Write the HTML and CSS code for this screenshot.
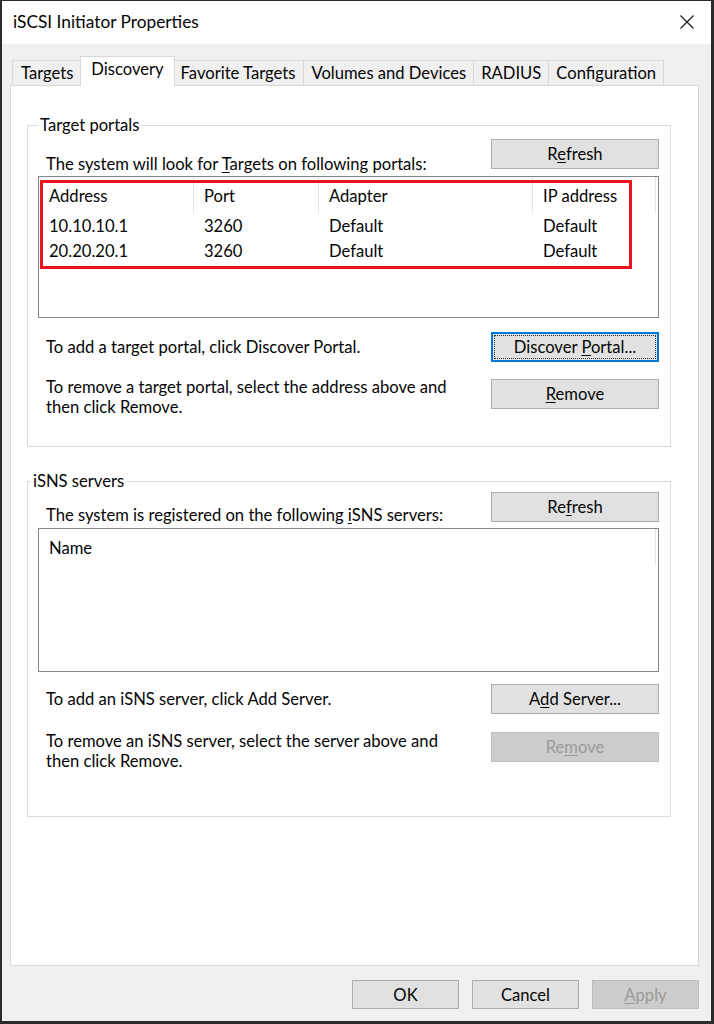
FILE: index.html
```html
<!DOCTYPE html>
<html lang="en">
<head>
<meta charset="utf-8">
<title>iSCSI Initiator Properties</title>
<link rel="stylesheet" href="styles.css">
</head>
<body>
<div class="window">
  <header class="titlebar">
    <span class="title">iSCSI Initiator Properties</span>
    <svg class="close" width="16" height="16" viewBox="0 0 16 16" aria-label="Close"><path d="M1.5 1.5 L14.5 14.5 M14.5 1.5 L1.5 14.5" stroke="#1a1a1a" stroke-width="1.2" fill="none"/></svg>
  </header>
  <div class="client">
    <nav class="tabs">
      <div class="tab">Targets</div>
      <div class="tab active">Discovery</div>
      <div class="tab">Favorite Targets</div>
      <div class="tab">Volumes and Devices</div>
      <div class="tab">RADIUS</div>
      <div class="tab">Configuration</div>
    </nav>
    <div class="panel">
      <fieldset class="group group-portals">
        <legend>Target portals</legend>
        <div class="head-row">
          <span class="label">The system will look for <u>T</u>argets on following portals:</span>
          <button class="btn"><span>R<u>e</u>fresh</span></button>
        </div>
        <div class="listview lv-portals">
          <div class="lv-row lv-header">
            <div class="cell">Address</div>
            <div class="cell">Port</div>
            <div class="cell">Adapter</div>
            <div class="cell">IP address</div>
          </div>
          <div class="lv-row">
            <div class="cell">10.10.10.1</div>
            <div class="cell">3260</div>
            <div class="cell">Default</div>
            <div class="cell">Default</div>
          </div>
          <div class="lv-row">
            <div class="cell">20.20.20.1</div>
            <div class="cell">3260</div>
            <div class="cell">Default</div>
            <div class="cell">Default</div>
          </div>
          <div class="highlight"></div>
        </div>
        <div class="action-row first">
          <span class="label">To add a target portal, click Discover Portal.</span>
          <button class="btn focused"><span class="focus-ring"><span>Discover <u>P</u>ortal...</span></span></button>
        </div>
        <div class="action-row second">
          <span class="label">To remove a target portal, select the address above and<br>then click Remove.</span>
          <button class="btn"><span><u>R</u>emove</span></button>
        </div>
      </fieldset>

      <fieldset class="group group-isns">
        <legend>iSNS servers</legend>
        <div class="head-row">
          <span class="label">The system is registered on the following <u>i</u>SNS servers:</span>
          <button class="btn"><span>Re<u>f</u>resh</span></button>
        </div>
        <div class="listview lv-isns">
          <div class="lv-row lv-header">
            <div class="cell">Name</div>
          </div>
        </div>
        <div class="action-row first">
          <span class="label">To add an iSNS server, click Add Server.</span>
          <button class="btn"><span>A<u>d</u>d Server...</span></button>
        </div>
        <div class="action-row second">
          <span class="label">To remove an iSNS server, select the server above and<br>then click Remove.</span>
          <button class="btn" disabled><span>Re<u>m</u>ove</span></button>
        </div>
      </fieldset>
    </div>
    <footer class="footer">
      <button class="btn small"><span>OK</span></button>
      <button class="btn small"><span>Cancel</span></button>
      <button class="btn small" disabled><span><u>A</u>pply</span></button>
    </footer>
  </div>
</div>
</body>
</html>
```
FILE: styles.css
```css
* { box-sizing: border-box; }

body {
  margin: 0;
  font-family: Lato, "Open Sans", "Noto Sans", sans-serif;
  font-size: 16.6px;
  color: #050505;
  background: #fff;
}

.window {
  width: 714px;
  height: 1024px;
  border-style: solid;
  border-color: #2b2b2b;
  border-width: 1px 3px 3px 2px;
  background: #f0f0f0;
  display: flex;
  flex-direction: column;
}

.titlebar {
  height: 43px;
  background: #fff;
  display: flex;
  align-items: center;
  justify-content: space-between;
  padding: 0 16px 2px 11px;
}

.title { font-size: 17.3px; }

.close { display: block; }

.client {
  flex: 1;
  display: flex;
  flex-direction: column;
  padding: 12px 12px 0 8px;
}

.tabs {
  display: flex;
  align-items: flex-end;
  height: 29px;
  padding-left: 2px;
}

.tab {
  height: 25px;
  padding: 0 8px;
  border: 1px solid #d9d9d9;
  border-bottom: none;
  margin-left: -1px;
  background: #f0f0f0;
  display: flex;
  align-items: center;
  white-space: nowrap;
  line-height: 1;
}

.tab:first-child { margin-left: 0; }
.tab:nth-child(n+4) { padding: 0 7px; }

.tab.active {
  position: relative;
  z-index: 2;
  height: 30px;
  margin: 0 -2px -1px -2px;
  padding: 0 10px 4px;
  background: #fff;
}

.panel {
  flex: 1;
  background: #fff;
  border: 1px solid #d9d9d9;
  padding: 29px 0 0 16px;
}

.group {
  width: 644px;
  margin: 0;
  border: 1px solid #dcdcdc;
  padding: 0 11px 29px 10px;
}

.group legend {
  padding: 0 2px;
  line-height: 20px;
}

.group-isns { margin-top: 24px; padding-bottom: 45px; }
.group-isns legend { margin-left: -7px; }

.label {
  padding-left: 8px;
  line-height: 20px;
}

.head-row {
  display: flex;
  justify-content: space-between;
  align-items: flex-end;
  margin-top: 4px;
}

.head-row .label { margin-bottom: 2px; }
.head-row .btn { margin-bottom: 7px; }

.group-isns .head-row { margin-top: 1px; }
.group-isns .head-row .label { margin-bottom: 3px; }
.group-isns .head-row .btn { margin-bottom: 6px; }

.btn {
  width: 168px;
  height: 30px;
  flex: none;
  font: inherit;
  color: #050505;
  background: #e1e1e1;
  border: 1px solid #adadad;
  padding: 0;
  display: flex;
  align-items: center;
  justify-content: center;
}

.btn u, .label u { text-underline-offset: 2px; text-decoration-thickness: 1px; }

.btn:disabled {
  background: #cccccc;
  border-color: #bfbfbf;
  color: #9a9a9a;
}

.btn.focused {
  border-color: #0078d7;
  box-shadow: inset 0 0 0 1px #0078d7;
}

.focus-ring {
  display: flex;
  align-items: center;
  justify-content: center;
  width: 160px;
  height: 22px;
  outline: 1px dotted #333;
}

.listview {
  position: relative;
  border: 1px solid #828790;
  background: #fff;
}

.lv-portals { height: 142px; }
.lv-isns { height: 144px; }

.lv-row {
  display: grid;
  grid-template-columns: 155px 125px 214px 123px;
  height: 25px;
  align-items: center;
}

.lv-isns .lv-row { grid-template-columns: 617px; }

.lv-row .cell { padding-left: 10px; white-space: nowrap; }

.lv-header { height: 36px; align-items: stretch; }

.lv-header .cell {
  border-right: 1px solid #e5e5e5;
  padding-top: 8px;
  line-height: 22px;
}

.highlight {
  position: absolute;
  left: 1px;
  top: 3px;
  width: 592px;
  height: 89px;
  border: 3px solid #ea1520;
}

.action-row {
  display: flex;
  justify-content: space-between;
}

.action-row.first { margin-top: 14px; align-items: center; }
.action-row.second { margin-top: 17px; align-items: flex-start; }
.action-row.second .label { margin-top: -2px; }

.group-isns .action-row.first { margin-top: 12px; }
.group-isns .action-row.second { margin-top: 18px; }
.group-isns .action-row.second .label { margin-top: -1px; }

.footer {
  height: 55px;
  display: flex;
  justify-content: flex-end;
  align-items: flex-start;
  gap: 13px;
  padding-top: 14px;
}

.btn.small { width: 107px; height: 29px; }
```
